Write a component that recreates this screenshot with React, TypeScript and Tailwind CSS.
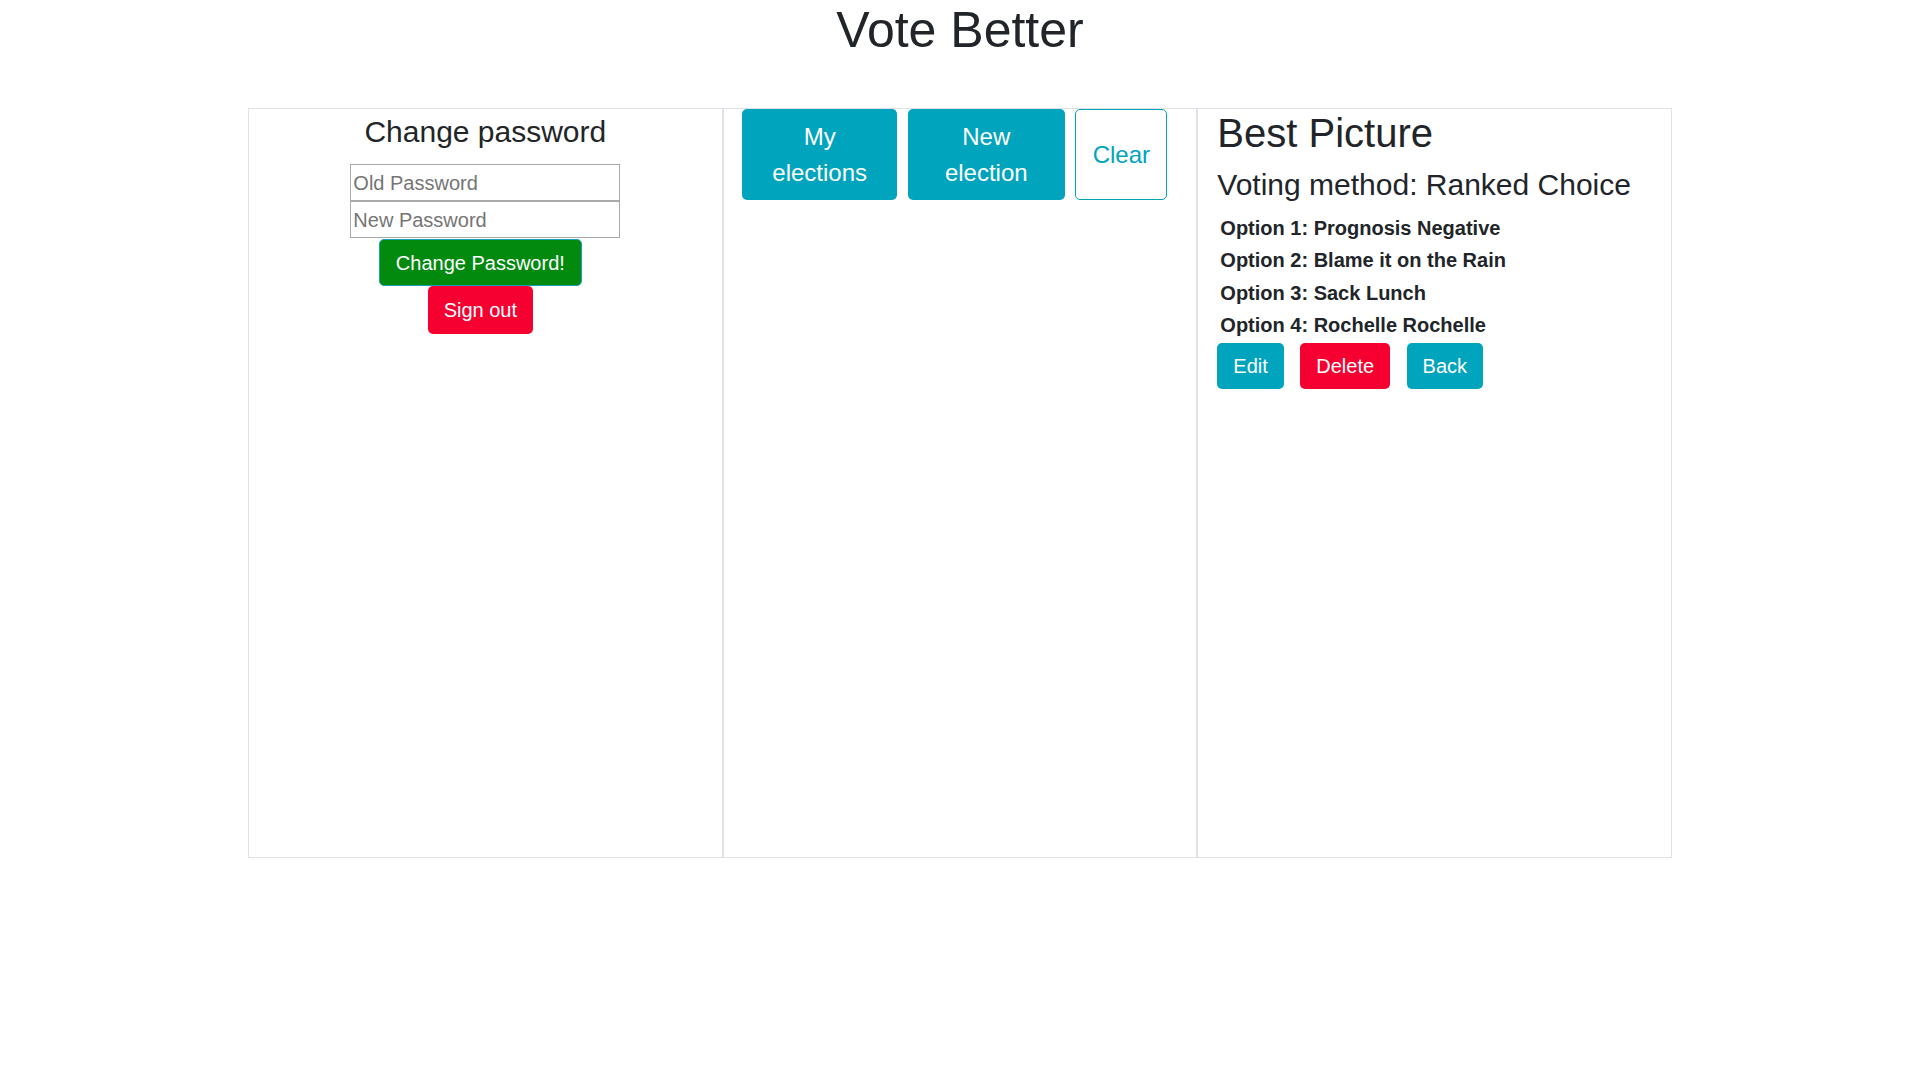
export default function App() {
  const options = [
    "Prognosis Negative",
    "Blame it on the Rain",
    "Sack Lunch",
    "Rochelle Rochelle",
  ];

  return (
    <div className="min-h-screen bg-white font-['Liberation_Sans',Arial,sans-serif] text-[#212529]">
      <h1 className="pt-[1px] text-center text-[50px] leading-[58px]">Vote Better</h1>

      <div className="mx-auto mt-[49px] grid w-[1424px] grid-cols-3">
        {/* account column */}
        <div className="flex h-[750px] flex-col items-center border border-[#dee2e6] px-[19px]">
          <h3 className="mt-[5px] text-[30px] leading-[36px]">Change password</h3>
          <input
            type="password"
            placeholder="Old Password"
            className="mt-[14px] h-[37px] w-[270px] border border-[#a9a9a9] px-[2px] pt-[1px] text-[20px] outline-none placeholder:text-[#757575]"
          />
          <input
            type="password"
            placeholder="New Password"
            className="h-[37px] w-[270px] border border-[#a9a9a9] px-[2px] pt-[1px] text-[20px] outline-none placeholder:text-[#757575]"
          />
          <button className="mr-[10px] mt-[1px] h-[47px] rounded-[5px] border border-[#17a2b8] bg-[#028a0f] px-4 text-[20px] text-white">
            Change Password!
          </button>
          <button className="mr-[10px] h-[48px] rounded-[5px] bg-[#f50031] px-4 text-[20px] text-white">
            Sign out
          </button>
        </div>

        {/* elections column */}
        <div className="flex h-[750px] items-start gap-[10.6px] border border-[#dee2e6] pl-[18.5px]">
          <button className="flex h-[91px] w-[155px] items-center justify-center rounded-[5px] bg-[#00a4bd] text-[24px] leading-[36px] text-white">
            My
            <br />
            elections
          </button>
          <button className="flex h-[91px] w-[157px] items-center justify-center rounded-[5px] bg-[#00a4bd] text-[24px] leading-[36px] text-white">
            New
            <br />
            election
          </button>
          <button className="flex h-[91px] w-[92px] items-center justify-center rounded-[5px] border border-[#00a4bd] bg-white text-[24px] leading-[36px] text-[#00a4bd]">
            Clear
          </button>
        </div>

        {/* election detail column */}
        <div className="flex h-[750px] flex-col border border-[#dee2e6] pl-[19px]">
          <h1 className="text-[40px] leading-[48px]">Best Picture</h1>
          <h3 className="mt-[10px] text-[30px] leading-[35.5px]">Voting method: Ranked Choice</h3>
          <div className="mt-[9.5px] pl-[3px]">
            {options.map((o, i) => (
              <div key={i} className="text-[20px] font-bold leading-[32.33px]">
                Option {i + 1}: {o}
              </div>
            ))}
          </div>
          <div className="mt-[2px] flex gap-[16.5px]">
            <button className="h-[46px] rounded-[5px] bg-[#00a4bd] px-4 text-[20px] text-white">Edit</button>
            <button className="h-[46px] rounded-[5px] bg-[#f50031] px-4 text-[20px] text-white">Delete</button>
            <button className="h-[46px] rounded-[5px] bg-[#00a4bd] px-4 text-[20px] text-white">Back</button>
          </div>
        </div>
      </div>
    </div>
  );
}
